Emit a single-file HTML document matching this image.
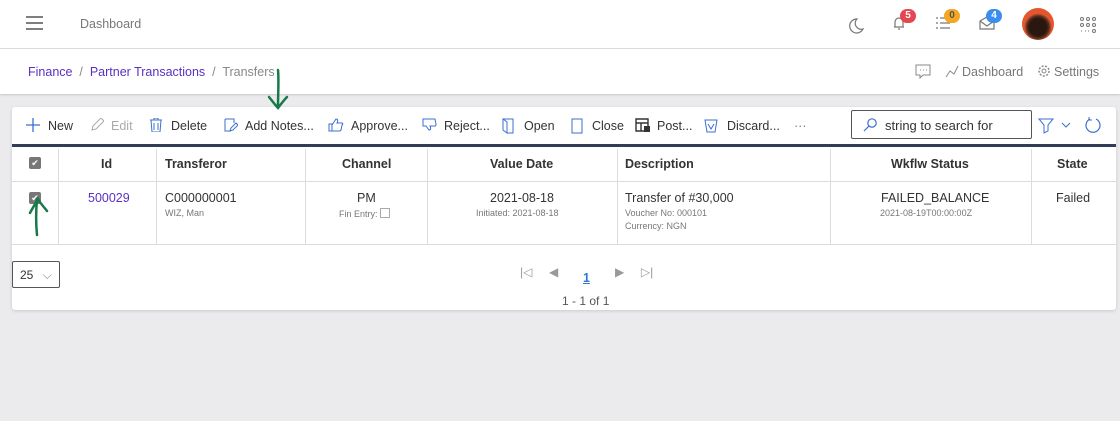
<!DOCTYPE html>
<html><head><style>
*{box-sizing:border-box;margin:0;padding:0}
body{width:1120px;height:421px;background:#ebebed;font-family:"Liberation Sans",sans-serif;color:#333;position:relative;overflow:hidden;font-size:12.5px}
.top{position:absolute;left:0;top:0;width:1120px;height:49px;background:#fff;border-bottom:1px solid #ddd}
.bc{position:absolute;left:0;top:49px;width:1120px;height:45px;background:#fff;box-shadow:0 1px 2px rgba(0,0,0,.15)}
.a{position:absolute;white-space:nowrap}
.card{position:absolute;left:12px;top:107px;width:1104px;height:203px;background:#fff;border-radius:3px;box-shadow:0 1px 3px rgba(0,0,0,.15)}
.tb span{position:absolute;top:12px;font-size:12.5px;color:#333}
.tb svg{position:absolute;top:11px}
.badge{position:absolute;width:16px;height:14px;border-radius:8px;color:#fff;font-size:10px;font-weight:bold;text-align:center;line-height:14px}
.vl{position:absolute;top:42px;height:95px;width:1px;background:#dcdcdc}
.th{position:absolute;top:50px;font-weight:bold;font-size:12.5px;color:#333}
.sm{font-size:9px;color:#777}
</style></head><body>
<div class="top">
 <svg class="a" style="left:26px;top:16px" width="18" height="14"><path d="M0 1h17M0 7h17M0 13h17" stroke="#555" stroke-width="1.6"/></svg>
 <div class="a" style="left:80px;top:17px;color:#777;font-size:12.5px">Dashboard</div>
 <svg class="a" style="left:848px;top:18px" width="16" height="16"><path d="M9 1A7 7 0 1 0 15 11A6 6 0 0 1 9 1Z" fill="none" stroke="#777" stroke-width="1.2"/></svg>
 <svg class="a" style="left:892px;top:15px" width="14" height="16"><path d="M2 12h10M3 12V7a4 4 0 0 1 8 0v5M6 14h2" fill="none" stroke="#777" stroke-width="1.2"/></svg>
 <div class="badge" style="left:900px;top:9px;background:#e4474f">5</div>
 <svg class="a" style="left:936px;top:16px" width="14" height="14"><path d="M0 2h2M0 7h2M0 12h2M4 2h10M4 7h10M4 12h10" stroke="#777" stroke-width="1.2"/></svg>
 <div class="badge" style="left:944px;top:9px;background:#f5a623;color:#555">0</div>
 <svg class="a" style="left:979px;top:16px" width="16" height="14"><path d="M1 5l7-4 7 4v8H1zM1 5l7 5 7-5" fill="none" stroke="#777" stroke-width="1.2"/></svg>
 <div class="badge" style="left:986px;top:9px;background:#3b8ef0">4</div>
 <div class="a" style="left:1022px;top:8px;width:32px;height:32px;border-radius:50%;background:radial-gradient(circle at 50% 60%,#2a1810 0 35%,#5a3020 45%,#e4572e 55%)"></div>
 <svg class="a" style="left:1080px;top:17px" width="16" height="16"><g fill="none" stroke="#777"><circle cx="2" cy="2" r="1.5"/><circle cx="8" cy="2" r="1.5"/><circle cx="14" cy="2" r="1.5"/><circle cx="2" cy="8" r="1.5"/><circle cx="8" cy="8" r="1.5"/><circle cx="14" cy="8" r="1.5"/><circle cx="14" cy="14" r="1.5"/></g><path d="M1 14h1M5 14h1M8 14h1" stroke="#777"/></svg>
</div>
<div class="bc">
 <div class="a" style="left:28px;top:16px;font-size:12.5px;color:#5a2fc2">Finance <span style="color:#888">&nbsp;/&nbsp;</span> Partner Transactions <span style="color:#888">&nbsp;/&nbsp; Transfers</span></div>
 <svg class="a" style="left:915px;top:15px" width="16" height="15"><path d="M1 1h14v10H8l-3 3v-3H1z" fill="none" stroke="#888"/><path d="M5 6h1M8 6h1M11 6h1" stroke="#888"/></svg>
 <svg class="a" style="left:944px;top:15px" width="16" height="15"><path d="M2 13l4-6 4 3 4-8" fill="none" stroke="#888"/></svg>
 <div class="a" style="left:962px;top:16px;color:#777">Dashboard</div>
 <svg class="a" style="left:1037px;top:15px" width="14" height="14"><circle cx="7" cy="7" r="5" fill="none" stroke="#888" stroke-width="1.5" stroke-dasharray="2 1.5"/><circle cx="7" cy="7" r="2" fill="none" stroke="#888"/></svg>
 <div class="a" style="left:1054px;top:16px;color:#777">Settings</div>
</div>
<div class="card">
 <div class="tb">
  <svg style="left:14px" width="14" height="14"><path d="M7 0v14M0 7h14" stroke="#3b6fd0" stroke-width="1.3"/></svg><span style="left:36px">New</span>
  <svg style="left:78px" width="14" height="14"><path d="M2 12l1-4 8-8 3 3-8 8z" fill="none" stroke="#aaa"/></svg><span style="left:99px;color:#aaa">Edit</span>
  <svg style="left:138px" width="12" height="14"><path d="M0 2h12M4 2V0h4v2M1 2l1 12h8l1-12M4 5v7M8 5v7" fill="none" stroke="#3b6fd0"/></svg><span style="left:159px">Delete</span>
  <svg style="left:212px" width="14" height="14"><path d="M1 1h9v4M1 1v12h6M6 13l1-3 5-5 2 2-5 5z" fill="none" stroke="#3b6fd0"/></svg><span style="left:233px">Add Notes...</span>
  <svg style="left:316px" width="16" height="14"><path d="M1 6h3v7H1zM4 7l4-6c2 0 2 2 1 4h5c1 0 1 2 0 2l-1 5c0 1-1 1-2 1H4" fill="none" stroke="#3b6fd0"/></svg><span style="left:339px">Approve...</span>
  <svg style="left:410px" width="16" height="14"><path d="M1 1h12l1 5c0 1 0 2-1 2H8c1 2 1 4-1 4L4 8H1z" fill="none" stroke="#3b6fd0"/></svg><span style="left:432px">Reject...</span>
  <svg style="left:490px" width="12" height="16"><path d="M1 1h10v14H5M1 1v11l4 3V4z" fill="none" stroke="#3b6fd0"/></svg><span style="left:512px">Open</span>
  <svg style="left:559px" width="12" height="16"><path d="M1 1h10v14H1z" fill="none" stroke="#3b6fd0"/></svg><span style="left:580px">Close</span>
  <svg style="left:623px" width="16" height="14"><path d="M1 1h12v12H1zM1 5h12M6 5v8" fill="none" stroke="#333" stroke-width="1.4"/><rect x="9" y="8" width="6" height="6" fill="#333"/></svg><span style="left:645px">Post...</span>
  <svg style="left:692px" width="14" height="15"><path d="M1 2h12l-2 12H3zM4 6l3 5 3-5" fill="none" stroke="#3b6fd0"/></svg><span style="left:715px">Discard...</span>
  <span style="left:782px;color:#777">···</span>
 </div>
 <div class="a" style="left:839px;top:3px;width:181px;height:29px;border:1px solid #555;border-radius:2px"></div>
 <svg class="a" style="left:851px;top:11px" width="14" height="14"><circle cx="9" cy="5" r="4.2" fill="none" stroke="#3b6fd0" stroke-width="1.2"/><path d="M6 8l-5 5" stroke="#3b6fd0" stroke-width="1.2"/></svg>
 <div class="a" style="left:873px;top:11px;color:#333;font-size:13px">string to search for</div>
 <svg class="a" style="left:1026px;top:11px" width="40" height="16"><path d="M1 1h14l-5 6v6l-4 2V7z" fill="none" stroke="#3b6fd0"/><path d="M24 5l4 4 4-4" fill="none" stroke="#3b6fd0"/></svg>
 <svg class="a" style="left:1072px;top:9px" width="18" height="18"><path d="M6 3A7 7 0 1 0 12 3" fill="none" stroke="#3b6fd0" stroke-width="1.2"/><path d="M5 1v3h3" fill="none" stroke="#3b6fd0"/></svg>
 <div class="a" style="left:0;top:37px;width:1104px;height:3px;background:#2f3e55"></div>
 <div class="a" style="left:0;top:74px;width:1104px;height:1px;background:#dcdcdc"></div>
 <div class="a" style="left:0;top:137px;width:1104px;height:1px;background:#dcdcdc"></div>
 <div class="vl" style="left:46px"></div><div class="vl" style="left:144px"></div><div class="vl" style="left:293px"></div><div class="vl" style="left:415px"></div><div class="vl" style="left:605px"></div><div class="vl" style="left:818px"></div><div class="vl" style="left:1019px"></div>
 <div class="a" style="left:17px;top:50px;width:12px;height:12px;background:#777;border-radius:2px;color:#fff;font-size:9px;text-align:center;line-height:12px">✔</div>
 <div class="th" style="left:89px">Id</div>
 <div class="th" style="left:153px">Transferor</div>
 <div class="th" style="left:330px">Channel</div>
 <div class="th" style="left:478px">Value Date</div>
 <div class="th" style="left:613px">Description</div>
 <div class="th" style="left:879px">Wkflw Status</div>
 <div class="th" style="left:1045px">State</div>
 <div class="a" style="left:17px;top:85px;width:12px;height:12px;background:#777;border-radius:2px;color:#fff;font-size:9px;text-align:center;line-height:12px">✔</div>
 <div class="a" style="left:76px;top:84px;color:#5a2fc2">500029</div>
 <div class="a" style="left:153px;top:84px">C000000001<div class="sm" style="margin-top:3px">WIZ, Man</div></div>
 <div class="a" style="left:345px;top:84px">PM</div>
 <div class="a sm" style="left:327px;top:101px">Fin Entry: <span style="display:inline-block;width:10px;height:10px;border:1px solid #aaa;vertical-align:-1px"></span></div>
 <div class="a" style="left:478px;top:84px">2021-08-18</div>
 <div class="a sm" style="left:464px;top:101px">Initiated: 2021-08-18</div>
 <div class="a" style="left:613px;top:84px">Transfer of #30,000<div class="sm" style="margin-top:3px">Voucher No: 000101</div><div class="sm" style="margin-top:3px">Currency: NGN</div></div>
 <div class="a" style="left:869px;top:84px">FAILED_BALANCE</div>
 <div class="a sm" style="left:868px;top:101px">2021-08-19T00:00:00Z</div>
 <div class="a" style="left:1044px;top:84px">Failed</div>
 <div class="a" style="left:0;top:154px;width:48px;height:27px;border:1px solid #555;border-radius:2px;padding:6px 0 0 7px;font-size:12px">25 <span style="color:#888;margin-left:6px">⌵</span></div>
 <div class="a" style="left:508px;top:158px;color:#999;font-size:12px">|◁ &nbsp;&nbsp;&nbsp; ◀</div>
 <div class="a" style="left:571px;top:164px;color:#2f7ad0;font-weight:bold;text-decoration:underline">1</div>
 <div class="a" style="left:603px;top:158px;color:#999;font-size:12px">▶ &nbsp;&nbsp;&nbsp; ▷|</div>
 <div class="a" style="left:550px;top:187px;color:#555;font-size:12px">1 - 1 of 1</div>
</div>
<svg class="a" style="left:0;top:0" width="1120" height="421"><g fill="none" stroke="#177a4b" stroke-width="2.5" stroke-linecap="round"><path d="M278 70c1 10 0 25 0 36M269 97c4 5 7 9 9 11c3-4 6-8 9-11"/><path d="M37 235c-1-10 -1-25 0-36M30 213c3-6 6-10 8-14c2 4 6 8 9 12"/></g></svg>
</body></html>
